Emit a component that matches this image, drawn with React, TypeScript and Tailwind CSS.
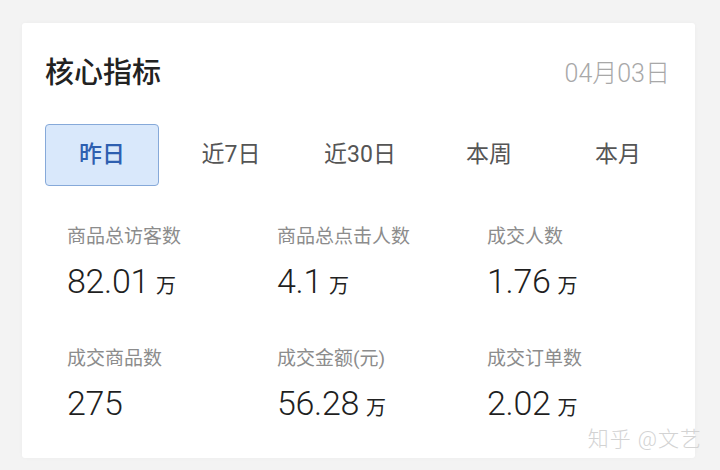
const tabs = ["昨日", "近7日", "近30日", "本周", "本月"];

const metrics = [
  { label: "商品总访客数", value: "82.01", unit: "万" },
  { label: "商品总点击人数", value: "4.1", unit: "万" },
  { label: "成交人数", value: "1.76", unit: "万" },
  { label: "成交商品数", value: "275", unit: "" },
  { label: "成交金额(元)", value: "56.28", unit: "万" },
  { label: "成交订单数", value: "2.02", unit: "万" },
];

const cjk = "font-['Roboto','Noto_Sans_CJK_SC',sans-serif]";

export default function App() {
  return (
    <div className={`w-[720px] h-[470px] bg-[#f3f3f3] pt-[23px] pl-[22px] ${cjk}`}>
      <div className="relative w-[673px] h-[435px] bg-white rounded-[3px] shadow-[0_0_4px_rgba(0,0,0,0.03)]">
        <div className="flex items-center justify-between pl-[23px] pr-[25px] pt-[31px]">
          <h1 className="text-[29px] leading-[36px] font-medium text-[#222]">核心指标</h1>
          <span className="text-[25px] leading-[36px] font-light text-[#a8a8a8] mt-[2px]">04月03日</span>
        </div>

        <div className="grid grid-cols-5 px-[14px] mt-[32px]">
          {tabs.map((t, i) => (
            <div key={t} className="pl-[9px] pr-[6px]">
              <div
                className={
                  i === 0
                    ? "h-[62px] flex items-center justify-center rounded-[4px] border border-[#86a9d9] bg-[#d9e8fb] text-[#2e5fb0] text-[23px] font-medium"
                    : "h-[62px] flex items-center justify-center text-[23px] text-[#555]"
                }
              >
                {t}
              </div>
            </div>
          ))}
        </div>

        <div className="grid grid-cols-[210px_210px_210px] pl-[45px] mt-[37px] gap-y-[42px]">
          {metrics.map((m) => (
            <div key={m.label} className="flex flex-col">
              <span className="text-[19px] leading-[28px] text-[#8c8c8c]">{m.label}</span>
              <div className="flex items-baseline mt-[8px] h-[44px]">
                <span className="font-['Roboto',sans-serif] text-[34px] leading-[44px] font-light tracking-[-0.3px] text-[#1f1f1f]">
                  {m.value}
                </span>
                {m.unit && <span className="ml-[7px] text-[20px] text-[#222]">{m.unit}</span>}
              </div>
            </div>
          ))}
        </div>

        <div className="absolute right-[-7px] bottom-[3px] text-[21px] font-light text-[#d3d3d3] tracking-[1px]">
          知乎 @文艺
        </div>
      </div>
    </div>
  );
}
